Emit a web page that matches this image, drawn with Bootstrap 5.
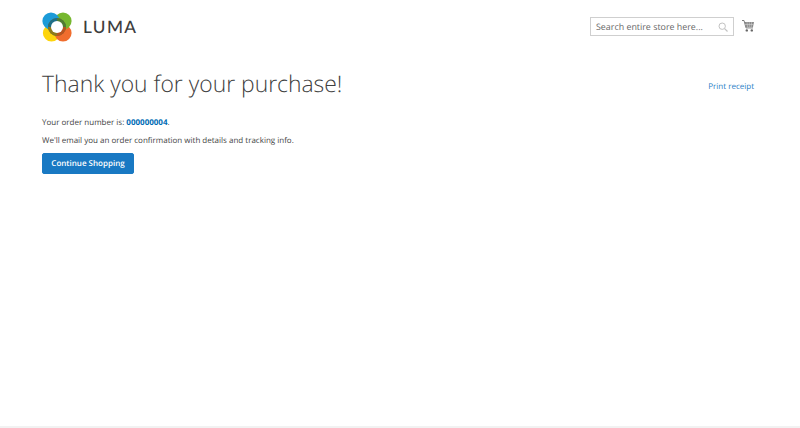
<!doctype html>
<html lang="en"><head><meta charset="utf-8"><title>Thank you</title>
<link href="https://cdn.jsdelivr.net/npm/bootstrap@5.3.0/dist/css/bootstrap.min.css" rel="stylesheet">
<style>
html,body{height:100%}
body{font-family:"Open Sans",sans-serif;color:#444;font-size:8px;line-height:1.4;background:#fff;display:flex;flex-direction:column;min-height:428px;overflow:hidden;text-rendering:geometricPrecision}
.shell{padding:0 46px 0 42px;flex:1 1 auto}
.topbar{height:46px;padding-top:12px}
.brand{gap:11px;color:#333;text-decoration:none}
.brand-name{font-family:"Lato",sans-serif;font-size:17.2px;letter-spacing:1.4px;color:#3d3d3d;font-weight:500;line-height:1}
.search-box{width:144px;height:19px;border:1px solid #cfcfcf;padding:0 5px;font-size:8.9px;color:#666;line-height:17px;white-space:nowrap}
.cart-icon{margin-top:3px}
.title-row{margin-top:22px}
.page-title{font-weight:300;font-size:22.9px;line-height:1.4;margin:0;color:#404040}
.print-link{color:#2a80c6;text-decoration:none;font-size:8px;margin-top:13px}
.order-line{margin:17px 0 0;line-height:12px}
.order-line a{color:#006bb4;font-weight:700;text-decoration:none}
.mail-line{margin:6px 0 6px;line-height:12px}
.go-btn{background:#1979c3;border:1px solid #1979c3;color:#fff;font-size:8px;font-weight:600;line-height:11px;padding:4px 0;height:21px;border-radius:2px;width:92px;white-space:nowrap}
.go-btn:hover{background:#006bb4;color:#fff}
.foot-line{height:2px;background:#f2f2f2;flex:0 0 2px}
</style></head>
<body>
<div class="shell">
<header class="topbar d-flex justify-content-between align-items-start">
<a class="brand d-flex align-items-center" href="#">
<svg width="30" height="30" viewBox="0 0 30 30" aria-hidden="true">
<circle cx="9.5" cy="21" r="8.6" fill="#fdd40c"/>
<circle cx="21" cy="21" r="8.6" fill="#f06d2e"/>
<circle cx="21" cy="9" r="8.6" fill="#76b72f"/>
<circle cx="9" cy="9" r="8.6" fill="#1c9bd8"/>
<circle cx="15" cy="15" r="9" fill="#6f6a35"/>
<path d="M15 6a9 9 0 0 0-9 9H15z" fill="#1f6f86"/>
<path d="M15 6a9 9 0 0 1 9 9H15z" fill="#4f7d33"/>
<path d="M15 24a9 9 0 0 1-9-9H15z" fill="#8d7a1c"/>
<path d="M15 24a9 9 0 0 0 9-9H15z" fill="#b8541f"/>
<circle cx="15" cy="15" r="6" fill="#fff"/>
</svg>
<span class="brand-name">LUMA</span>
</a>
<div class="d-flex align-items-start" style="margin-top:5px">
<div class="search-box d-flex justify-content-between align-items-center">
<span>Search entire store here...</span>
<svg width="10" height="10" viewBox="0 0 10 10" aria-hidden="true"><circle cx="4.2" cy="4.2" r="3.2" fill="none" stroke="#c2c2c2" stroke-width="1"/><path d="M6.6 6.6 9.5 9.5" stroke="#c2c2c2" stroke-width="1.2"/></svg>
</div>
<svg class="cart-icon ms-2" width="12" height="12" viewBox="0 0 12 12" aria-hidden="true"><path d="M0 .5h2l2 7.4h7" fill="none" stroke="#707070" stroke-width=".9"/><path d="M2.6 2h9.4l-1 5H3.9z" fill="#8a8a8a"/><path d="M5 2.2 5.5 7M7.3 2.2V7M9.6 2.2 9.2 7M3.2 4.5h8.2" stroke="#dcdcdc" stroke-width=".5"/><circle cx="4.8" cy="10.4" r="1.2" fill="#666"/><circle cx="9.8" cy="10.4" r="1.2" fill="#666"/></svg>
</div>
</header>
<main>
<div class="title-row d-flex justify-content-between align-items-start">
<h1 class="page-title">Thank you for your purchase!</h1>
<a class="print-link" href="#">Print receipt</a>
</div>
<p class="order-line">Your order number is: <a href="#">000000004</a>.</p>
<p class="mail-line">We'll email you an order confirmation with details and tracking info.</p>
<a class="btn go-btn" href="#">Continue Shopping</a>
</main>
</div>
<div class="foot-line"></div>
</body></html>
